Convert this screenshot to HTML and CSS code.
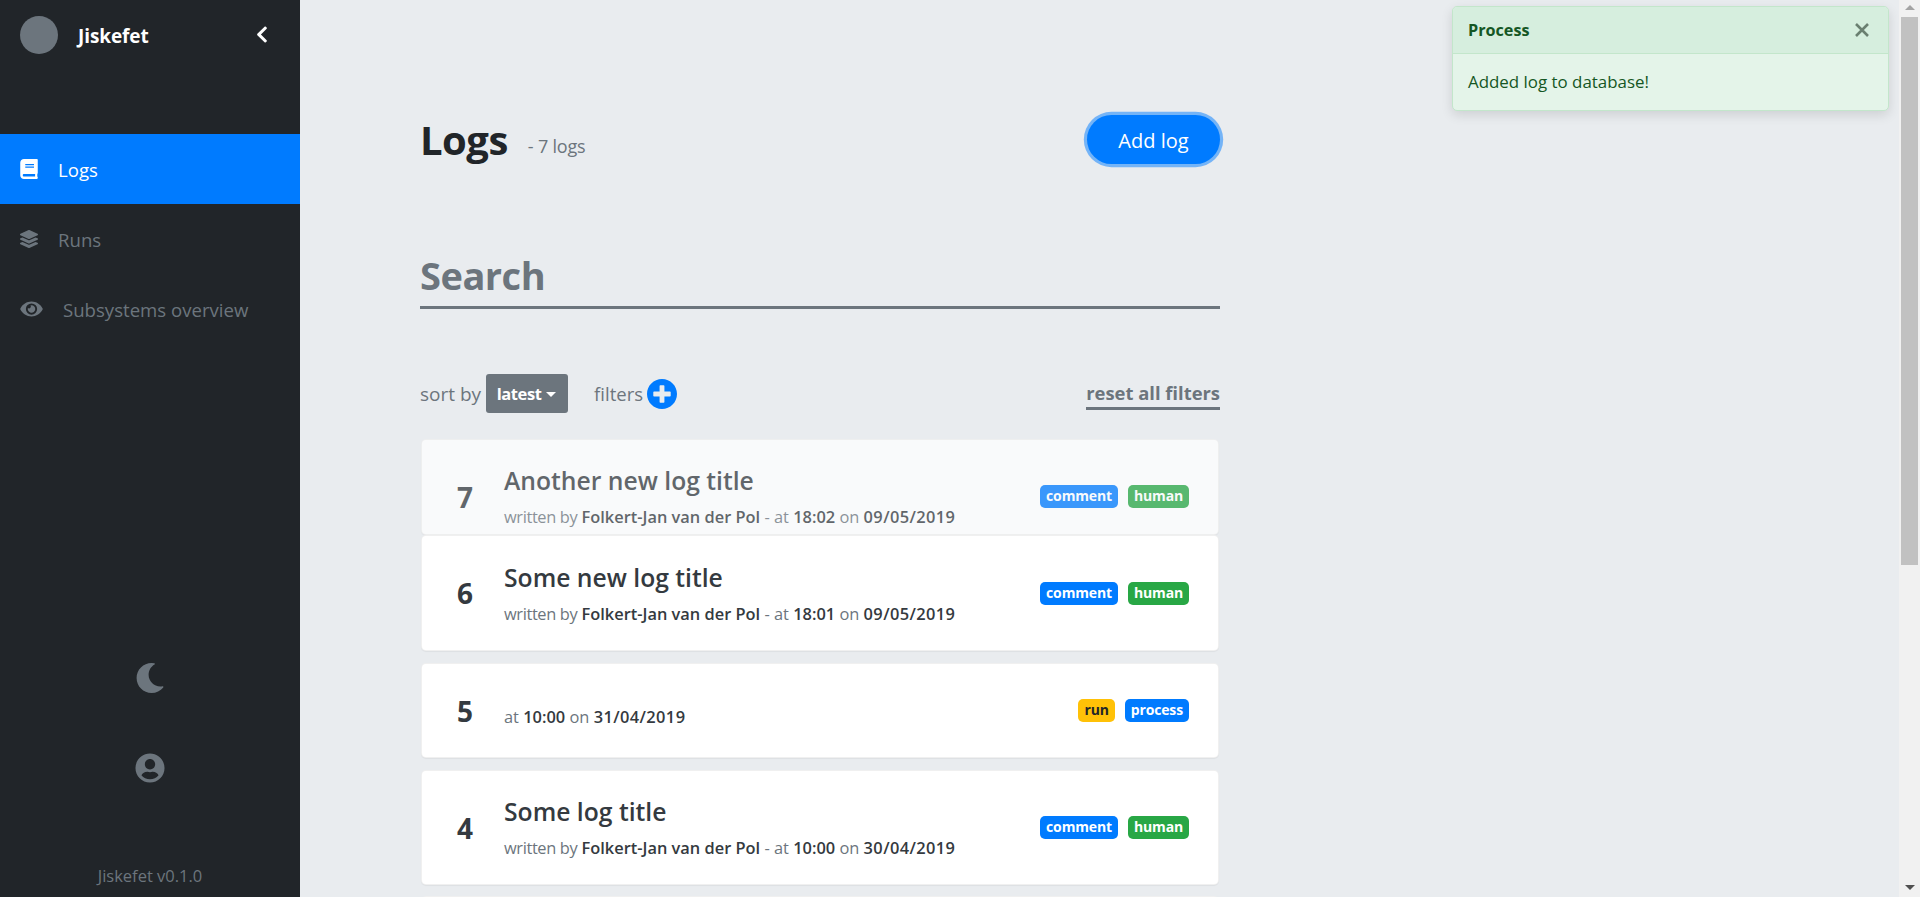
FILE: index.html
```html
<!DOCTYPE html>
<html lang="en">
<head>
<meta charset="utf-8">
<title>Jiskefet - Logs</title>
<link rel="stylesheet" href="styles.css">
</head>
<body>
<div class="app">
  <aside class="sidebar">
    <div class="brand">
      <span class="avatar"></span>
      <span class="brand-name">Jiskefet</span>
      <svg class="chevron" viewBox="0 0 320 512"><path d="M34.52 239.03L228.87 44.69c9.37-9.37 24.57-9.37 33.94 0l22.67 22.67c9.36 9.36 9.37 24.52.04 33.9L131.49 256l154.02 154.75c9.34 9.38 9.32 24.54-.04 33.9l-22.67 22.67c-9.37 9.37-24.57 9.37-33.94 0L34.52 272.97c-9.37-9.37-9.37-24.57 0-33.94z"/></svg>
    </div>
    <nav class="nav">
      <a class="nav-item active">
        <svg class="nav-icon" viewBox="0 0 448 512"><path d="M448 360V24c0-13.3-10.7-24-24-24H96C43 0 0 43 0 96v320c0 53 43 96 96 96h328c13.3 0 24-10.7 24-24v-16c0-7.5-3.5-14.3-8.9-18.7-4.2-15.4-4.2-59.3 0-74.7 5.4-4.3 8.9-11.1 8.9-18.6zM128 134c0-3.3 2.7-6 6-6h212c3.3 0 6 2.7 6 6v20c0 3.3-2.7 6-6 6H134c-3.3 0-6-2.7-6-6v-20zm0 64c0-3.3 2.7-6 6-6h212c3.3 0 6 2.7 6 6v20c0 3.3-2.7 6-6 6H134c-3.3 0-6-2.7-6-6v-20zm253.4 250H96c-17.7 0-32-14.3-32-32 0-17.6 14.4-32 32-32h285.4c-1.9 17.1-1.9 46.9 0 64z"/></svg>
        <span>Logs</span>
      </a>
      <a class="nav-item">
        <svg class="nav-icon" viewBox="0 0 512 512"><path d="M12.41 148.02l232.94 105.67c6.8 3.09 14.49 3.09 21.29 0l232.94-105.67c16.55-7.51 16.55-32.52 0-40.03L266.65 2.31a25.607 25.607 0 0 0-21.29 0L12.41 107.98c-16.55 7.51-16.55 32.53 0 40.04zm487.18 88.28l-58.09-26.33-161.64 73.27c-7.56 3.43-15.59 5.17-23.86 5.17s-16.29-1.74-23.86-5.17L70.51 209.97l-58.1 26.33c-16.55 7.5-16.55 32.5 0 40l232.94 105.59c6.8 3.08 14.49 3.08 21.29 0L499.59 276.3c16.55-7.5 16.55-32.5 0-40zm0 127.8l-57.87-26.23-161.86 73.37c-7.56 3.43-15.59 5.17-23.86 5.17s-16.29-1.74-23.86-5.17L70.29 337.87 12.41 364.1c-16.55 7.5-16.55 32.5 0 40l232.94 105.59c6.8 3.08 14.49 3.08 21.29 0L499.59 404.1c16.55-7.5 16.55-32.5 0-40z"/></svg>
        <span>Runs</span>
      </a>
      <a class="nav-item">
        <svg class="nav-icon wide" viewBox="0 0 576 512"><path d="M572.52 241.4C518.29 135.59 410.93 64 288 64S57.68 135.64 3.48 241.41a32.35 32.35 0 0 0 0 29.19C57.71 376.41 165.07 448 288 448s230.32-71.64 284.52-177.41a32.35 32.35 0 0 0 0-29.19zM288 400a144 144 0 1 1 144-144 143.93 143.93 0 0 1-144 144zm0-240a95.31 95.31 0 0 0-25.31 3.79 47.85 47.85 0 0 1-66.9 66.9A95.78 95.78 0 1 0 288 160z"/></svg>
        <span>Subsystems overview</span>
      </a>
    </nav>
    <div class="side-tools">
      <svg class="tool-icon moon" viewBox="0 0 512 512"><path d="M283.211 512c78.962 0 151.079-35.925 198.857-94.792 7.068-8.708-.639-21.43-11.562-19.35-124.203 23.654-238.262-71.576-238.262-196.954 0-72.222 38.662-138.635 101.498-174.394 9.686-5.512 7.25-20.197-3.756-22.23A258.156 258.156 0 0 0 283.211 0c-141.309 0-256 114.511-256 256 0 141.309 114.511 256 256 256z"/></svg>
      <svg class="tool-icon" viewBox="0 0 496 512"><path d="M248 8C111 8 0 119 0 256s111 248 248 248 248-111 248-248S385 8 248 8zm0 96c48.6 0 88 39.4 88 88s-39.4 88-88 88-88-39.4-88-88 39.4-88 88-88zm0 344c-58.7 0-111.3-26.6-146.5-68.2 18.8-35.4 55.6-59.8 98.5-59.8 2.4 0 4.8.4 7.1 1.1 13 4.2 26.6 6.9 40.9 6.9 14.3 0 28-2.7 40.9-6.9 2.3-.7 4.7-1.1 7.1-1.1 42.9 0 79.7 24.4 98.5 59.8C359.3 421.4 306.7 448 248 448z"/></svg>
    </div>
    <div class="version">Jiskefet v0.1.0</div>
  </aside>

  <main class="main">
    <div class="content">
      <header class="page-head">
        <h1 class="page-title">Logs</h1>
        <span class="page-count">- 7 logs</span>
        <button class="add-btn">Add log</button>
      </header>
      <div class="search">Search</div>
      <div class="controls">
        <span class="ctl-label">sort by</span>
        <button class="sort-btn">latest<span class="caret"></span></button>
        <span class="ctl-label filters-label">filters</span>
        <svg class="plus" viewBox="8 8 496 496"><path d="M256 8C119 8 8 119 8 256s111 248 248 248 248-111 248-248S393 8 256 8zm144 276c0 6.6-5.4 12-12 12h-92v92c0 6.6-5.4 12-12 12h-56c-6.6 0-12-5.4-12-12v-92h-92c-6.6 0-12-5.4-12-12v-56c0-6.6 5.4-12 12-12h92v-92c0-6.6 5.4-12 12-12h56c6.6 0 12 5.4 12 12v92h92c6.6 0 12 5.4 12 12v56z"/></svg>
        <a class="reset">reset all filters</a>
      </div>

      <div class="log-list">
        <article class="log entering">
          <div class="log-num">7</div>
          <div class="log-body">
            <h2 class="log-title">Another new log title</h2>
            <p class="log-meta"><span class="by">written by</span> <b>Folkert-Jan van der Pol</b> - at <b>18:02</b> on <b>09/05/2019</b></p>
          </div>
          <div class="tags"><span class="tag blue">comment</span><span class="tag green">human</span></div>
        </article>
        <article class="log after-entering">
          <div class="log-num">6</div>
          <div class="log-body">
            <h2 class="log-title">Some new log title</h2>
            <p class="log-meta"><span class="by">written by</span> <b>Folkert-Jan van der Pol</b> - at <b>18:01</b> on <b>09/05/2019</b></p>
          </div>
          <div class="tags"><span class="tag blue">comment</span><span class="tag green">human</span></div>
        </article>
        <article class="log short">
          <div class="log-num">5</div>
          <div class="log-body">
            <p class="log-meta">at <b>10:00</b> on <b>31/04/2019</b></p>
          </div>
          <div class="tags"><span class="tag yellow">run</span><span class="tag blue">process</span></div>
        </article>
        <article class="log">
          <div class="log-num">4</div>
          <div class="log-body">
            <h2 class="log-title">Some log title</h2>
            <p class="log-meta"><span class="by">written by</span> <b>Folkert-Jan van der Pol</b> - at <b>10:00</b> on <b>30/04/2019</b></p>
          </div>
          <div class="tags"><span class="tag blue">comment</span><span class="tag green">human</span></div>
        </article>
        <article class="log next"></article>
      </div>
    </div>
  </main>

  <div class="scrollbar">
    <span class="arrow up"></span>
    <span class="thumb"></span>
    <span class="arrow down"></span>
  </div>

  <section class="toast">
    <div class="toast-head">
      <strong>Process</strong>
      <svg class="toast-close" viewBox="0 0 14 14"><path d="M1 1l12 12M13 1L1 13"/></svg>
    </div>
    <div class="toast-body">Added log to database!</div>
  </section>
</div>
</body>
</html>
```

FILE: styles.css
```css
* { box-sizing: border-box; }
html, body { margin: 0; height: 100%; overflow: hidden; }
body {
  font-family: "Open Sans", "Noto Sans", sans-serif;
  font-size: 16px;
  color: #212529;
  background: #e9ecef;
}
.app { display: flex; height: 897px; position: relative; overflow: hidden; }

/* sidebar */
.sidebar {
  width: 300px;
  flex: none;
  background: #212529;
  display: flex;
  flex-direction: column;
}
.brand { height: 134px; padding: 16px 32px 0 20px; display: flex; align-items: flex-start; }
.avatar { width: 38px; height: 38px; border-radius: 50%; background: #6c757d; flex: none; }
.brand-name { margin-left: 20px; font-size: 19px; font-weight: 700; line-height: 40px; color: #fff; letter-spacing: -.1px; }
.chevron { width: 12px; height: 19px; margin: 9px 0 0 auto; fill: #fff; }
.nav { display: flex; flex-direction: column; }
.nav-item { height: 70px; display: flex; align-items: center; padding-left: 20px; color: #6c757d; font-size: 18.6px; }
.nav-item.active { background: #007bff; color: #fff; }
.nav-icon { width: 18px; height: 20px; fill: currentColor; flex: none; margin-right: 20px; }
.nav-icon.wide { width: 23px; margin-right: 20px; }
.side-tools { margin-top: 319px; display: flex; flex-direction: column; align-items: center; gap: 60px; }
.tool-icon { width: 30px; height: 30px; fill: #6c757d; }
.version { margin-top: 81px; text-align: center; font-size: 16.5px; color: #6c757d; }

/* main */
.main { flex: 1; min-width: 0; }
.content { width: 800px; margin-left: 120px; padding-top: 115px; }
.page-head { display: flex; align-items: center; height: 49px; }
.page-title { margin: 0; font-size: 40px; font-weight: 700; line-height: 49px; color: #212529; letter-spacing: -.5px; }
.page-count { margin: 12px 0 0 20px; font-size: 18px; color: #6c757d; letter-spacing: -.2px; }
.add-btn {
  margin-left: auto;
  width: 133px;
  height: 49px;
  border: 0;
  border-radius: 25px;
  background: #007bff;
  color: #fff;
  font: inherit;
  font-size: 20px;
  padding: 2px 0 0;
  box-shadow: 0 0 0 3.2px rgba(0, 123, 255, .5);
}
.search {
  margin-top: 81px;
  height: 64px;
  border-bottom: 3px solid #6c757d;
  font-size: 38px;
  font-weight: 700;
  line-height: 60px;
  color: #6c757d;
  letter-spacing: -.5px;
}
.controls { margin-top: 65px; height: 39px; display: flex; align-items: center; color: #6c757d; }
.ctl-label { font-size: 19px; }
.filters-label { font-size: 18.5px; margin-left: 26px; }
.sort-btn {
  width: 82px;
  height: 39px;
  margin-left: 5px;
  border: 0;
  border-radius: 3px;
  background: #6c757d;
  color: #fff;
  font: inherit;
  font-size: 16.5px;
  font-weight: 700;
  letter-spacing: -.4px;
  padding: 0 2px 0 0;
}
.caret {
  display: inline-block;
  margin-left: 4px;
  vertical-align: 3px;
  border-top: 5.5px solid #fff;
  border-left: 5.5px solid transparent;
  border-right: 5.5px solid transparent;
}
.plus { width: 30px; height: 30px; margin-left: 4px; fill: #007bff; }
.reset {
  margin-left: auto;
  height: 33px;
  border-bottom: 3px solid #6c757d;
  font-size: 18.4px;
  font-weight: 700;
  line-height: 32px;
}

/* logs */
.log-list { margin-top: 26px; display: flex; flex-direction: column; gap: 12px; }
.log {
  position: relative;
  height: 115px;
  flex: none;
  margin: 0 1px;
  padding: 0 29px 0 35px;
  display: flex;
  align-items: center;
  background: #fff;
  border: 1px solid rgba(0, 0, 0, .06);
  border-radius: 5px;
  box-shadow: 0 1px 1px rgba(0, 0, 0, .05);
}
.log.short { height: 95px; }
.log.entering { height: 96px; opacity: .75; overflow: hidden; }
.log.entering > * { margin-bottom: -19px; }
.log.after-entering { margin-top: -12px; height: 116px; }
.log.next { margin-top: -1px; }
.log-num { width: 47px; flex: none; font-size: 28px; font-weight: 700; color: #343a40; }
.log-body { flex: 1; min-width: 0; }
.log-title { margin: 0 0 9px; font-size: 24.7px; font-weight: 600; line-height: 32px; color: #343a40; }
.log-meta { margin: 0; font-size: 16.4px; line-height: 22px; color: #6c757d; }
.log-meta b { font-weight: 600; color: #343a40; }
.log-meta b:last-child { letter-spacing: .4px; }
.by { letter-spacing: -.37px; }
.short .log-meta { margin-top: 12px; }
.tags { display: flex; gap: 10px; flex: none; }
.tag { height: 23px; padding: 0 6px; border-radius: 5px; color: #fff; font-size: 14px; font-weight: 700; line-height: 22px; letter-spacing: -.15px; }
.blue { background: #007bff; }
.green { background: #28a745; }
.yellow { background: #ffc107; color: #212529; }

/* scrollbar */
.scrollbar { position: absolute; top: 0; right: 0; bottom: 0; width: 21px; background: #f1f1f1; display: flex; flex-direction: column; align-items: center; padding-top: 5px; }
.arrow { width: 0; height: 0; border-left: 5px solid transparent; border-right: 5px solid transparent; }
.arrow.up { border-bottom: 5px solid #a3a3a3; }
.arrow.down { margin-top: 320px; border-top: 5px solid #505050; }
.thumb { width: 17px; height: 548px; margin-top: 7px; background: #c1c1c1; flex: none; }

/* toast */
.toast {
  position: absolute;
  top: 6px;
  left: 1452px;
  width: 437px;
  height: 105px;
  border: 1px solid #c3e6cb;
  border-radius: 5px;
  background: #e4f4e9;
  color: #155724;
  box-shadow: 0 4px 12px rgba(0, 0, 0, .12);
  overflow: hidden;
}
.toast-head {
  height: 47px;
  padding: 0 19px 0 15px;
  display: flex;
  align-items: center;
  justify-content: space-between;
  background: #d6eede;
  border-bottom: 1px solid #c3e6cb;
  font-size: 16.2px;
}
.toast-close { width: 14px; height: 14px; fill: none; stroke: #6a7f70; stroke-width: 2.6; }
.toast-body { padding: 16px 15px; font-size: 16.9px; line-height: 24px; }
```
